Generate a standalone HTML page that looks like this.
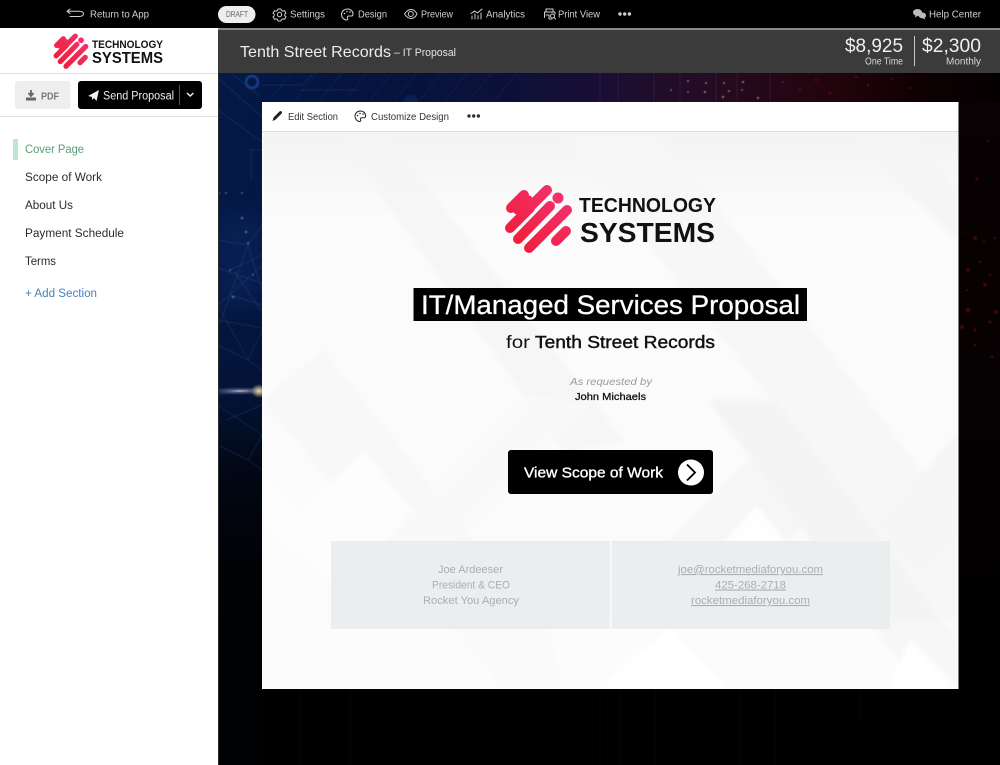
<!DOCTYPE html>
<html lang="en">
<head>
<meta charset="utf-8">
<title>Tenth Street Records – IT Proposal</title>
<style>
html,body{margin:0;padding:0;width:1000px;height:765px;overflow:hidden;background:#000}
svg{display:block}
text{font-family:"Liberation Sans","DejaVu Sans",sans-serif}
.t{fill:#cfcfcf;font-size:10.5px}
.n{fill:#2b2b2b;font-size:11.5px}
.c{fill:#a8afb1;font-size:11px}
.ic{fill:none;stroke:#cfcfcf;stroke-width:1;stroke-linecap:round;stroke-linejoin:round}
.k{fill:none;stroke:#222;stroke-width:1;stroke-linecap:round;stroke-linejoin:round}
.m{stroke-width:.3px}
</style>
</head>
<body>
<svg xmlns="http://www.w3.org/2000/svg" width="1000" height="765" viewBox="0 0 1000 765">
<defs>
<linearGradient id="bgH" x1="218" y1="0" x2="1000" y2="0" gradientUnits="userSpaceOnUse">
<stop offset="0" stop-color="#051c50"/><stop offset=".22" stop-color="#061645"/><stop offset=".38" stop-color="#0e1240"/><stop offset=".5" stop-color="#1e103a"/><stop offset=".62" stop-color="#2a0d28"/><stop offset=".78" stop-color="#28050f"/><stop offset=".9" stop-color="#100003"/><stop offset="1" stop-color="#040001"/>
</linearGradient>
<linearGradient id="bgV" x1="0" y1="73" x2="0" y2="765" gradientUnits="userSpaceOnUse">
<stop offset="0" stop-color="#000" stop-opacity=".12"/><stop offset=".22" stop-color="#000" stop-opacity=".12"/><stop offset=".46" stop-color="#000" stop-opacity=".3"/><stop offset=".58" stop-color="#000" stop-opacity=".75"/><stop offset=".72" stop-color="#000" stop-opacity=".94"/><stop offset="1" stop-color="#000" stop-opacity=".98"/>
</linearGradient>
<linearGradient id="rightTint" x1="0" y1="102" x2="0" y2="620" gradientUnits="userSpaceOnUse">
<stop offset="0" stop-color="#090103"/><stop offset=".6" stop-color="#060102"/><stop offset="1" stop-color="#000"/>
</linearGradient>
<radialGradient id="glare"><stop offset="0" stop-color="#d8cfc0" stop-opacity=".9"/><stop offset=".4" stop-color="#8d93b8" stop-opacity=".45"/><stop offset="1" stop-color="#7088c0" stop-opacity="0"/></radialGradient>
<radialGradient id="glareC"><stop offset="0" stop-color="#f2d898"/><stop offset="1" stop-color="#f2d898" stop-opacity="0"/></radialGradient>
<linearGradient id="logoU" gradientUnits="userSpaceOnUse" x1="505" y1="250" x2="568" y2="187">
<stop offset="0" stop-color="#ee1c33"/><stop offset="1" stop-color="#f23372"/>
</linearGradient>
<linearGradient id="top" x1="0" y1="132" x2="0" y2="215" gradientUnits="userSpaceOnUse">
<stop offset="0" stop-color="#f3f3f3"/><stop offset="1" stop-color="#f3f3f3" stop-opacity="0"/>
</linearGradient>
<filter id="soft"><feGaussianBlur stdDeviation=".5"/></filter>
<filter id="soft2"><feGaussianBlur stdDeviation="2"/></filter>
<filter id="soft3"><feGaussianBlur stdDeviation="14"/></filter>
</defs>

<!-- stage background -->
<rect x="218" y="73" width="782" height="692" fill="url(#bgH)"/>
<rect x="262" y="300" width="738" height="465" fill="#000" opacity=".55"/>
<rect x="218" y="73" width="782" height="692" fill="url(#bgV)"/>
<rect x="218" y="215" width="44" height="95" fill="#0c2d6c" opacity=".4" filter="url(#soft3)"/>
<rect x="958" y="102" width="42" height="663" fill="url(#rightTint)"/>

<!-- circuit and network lines -->
<g stroke="#4a6fb8" stroke-width=".7" fill="none" opacity=".32" filter="url(#soft)">
<path d="M218 78l45 40M232 74l28 22M218 110l44 32M250 150l12 0M251 150v30M262 255l-32 15M218 240l30 5 14-20M248 245l-18 50M248 245l14 45M230 295l-12 10M230 295l32 10M218 268l44 15M230 295l-10 30M230 295l32-30M218 320l44 8M235 272l27 40M218 345l30 15 14-30M248 360l14 10M218 305l30 55M218 395l44-8M218 405l44 30M226 420l36-15M218 445l30 15 14-25M248 460l14 10"/>
<path d="M270 100l22-27M295 100l22-27M320 100l22-27M345 100l22-27M370 100l22-27M395 100l22-27M420 100l22-27M445 100l22-27M470 100l22-27M495 100l22-27" opacity=".6"/>
<path d="M262 85h40l10-10M300 90h60"/>
<path d="M600 73v29M618 73v29M654 73v29M680 73v29M716 73v29M737 73v29M770 73v29" stroke="#a58ab8" opacity=".6"/>
</g>
<circle cx="252" cy="82" r="6" fill="none" stroke="#123a7c" stroke-width="3" filter="url(#soft)"/>
<circle cx="411" cy="103" r="8" fill="#123068" opacity=".45"/>
<g fill="#8fb0e6" opacity=".45" filter="url(#soft)">
<circle cx="242" cy="193" r="1"/><circle cx="219" cy="193" r="1"/><circle cx="226" cy="193" r="1"/><circle cx="242" cy="218" r="1.400"/><circle cx="246" cy="232" r="1.400"/><circle cx="248" cy="243" r="1.200"/><circle cx="233" cy="297" r="1.400"/><circle cx="253" cy="275" r="1"/><circle cx="230" cy="270" r="1"/>
</g>
<ellipse cx="240" cy="391" rx="34" ry="4" fill="url(#glare)"/>
<ellipse cx="259" cy="391" rx="8" ry="7" fill="url(#glareC)"/>
<g fill="#e7c8d8" opacity=".6" filter="url(#soft)">
<circle cx="688" cy="81" r="1"/><circle cx="706" cy="83" r="1"/><circle cx="724" cy="83" r="1"/><circle cx="743" cy="82" r="1.100"/><circle cx="729" cy="91" r="1"/><circle cx="705" cy="92" r="1.100"/><circle cx="671" cy="90" r=".9"/><circle cx="688" cy="92" r=".9"/><circle cx="758" cy="98" r="1.100"/><circle cx="723" cy="97" r="1.100"/><circle cx="742" cy="90" r=".9"/>
</g>
<g fill="#a02034" opacity=".7" filter="url(#soft)">
<circle cx="783" cy="82" r="1"/><circle cx="800" cy="90" r="1"/><circle cx="816" cy="80" r="1"/><circle cx="830" cy="93" r="1"/><circle cx="856" cy="77" r="1"/><circle cx="868" cy="85" r="1"/><circle cx="892" cy="79" r=".9"/><circle cx="910" cy="88" r=".9"/>
</g>
<g fill="#5a0d16" opacity=".65" filter="url(#soft)">
<circle cx="975" cy="238" r="2"/><circle cx="988" cy="141" r="1.200"/><circle cx="977" cy="179" r="1.600"/><circle cx="965" cy="232" r="1"/><circle cx="984" cy="242" r="1.200"/><circle cx="995" cy="238" r="1.200"/><circle cx="968" cy="270" r="2"/><circle cx="985" cy="285" r="2"/><circle cx="996" cy="312" r="2.200"/><circle cx="968" cy="310" r="2.400"/><circle cx="975" cy="330" r="1.600"/><circle cx="990" cy="322" r="1.800"/><circle cx="962" cy="327" r="2"/><circle cx="975" cy="345" r="1.400"/><circle cx="992" cy="357" r="1.400"/><circle cx="980" cy="262" r="1.400"/><circle cx="990" cy="275" r="1.200"/><circle cx="967" cy="290" r="1.200"/>
</g>
<g stroke="#140508" stroke-width="1" opacity=".6">
<path d="M620 690v75M655 690v75M740 690v75M775 690v75M600 690v75M300 690v75M350 690v75M860 690v30"/>
</g>
<rect x="218" y="73" width="1" height="692" fill="#2c2c2c"/>

<!-- top bar -->
<rect width="1000" height="28" fill="#000"/>
<rect x="218" y="28" width="782" height="45" fill="#3b3b3b"/>
<rect x="218" y="28" width="782" height="2" fill="#8a8a8a"/>
<rect x="0" y="28" width="218" height="737" fill="#fff"/>

<path class="ic" d="M70 9l-3 2.300 3 2.200M67 11.300h12c3 0 4.500 1 4.500 2.500S82 16.500 79 16.500h-9"/>
<text class="t" x="90" y="17.500" textLength="59" lengthAdjust="spacingAndGlyphs">Return to App</text>
<rect x="218" y="6" width="37.500" height="17" rx="8.500" fill="#eee"/>
<text x="226" y="17" font-size="8" fill="#666" textLength="22" lengthAdjust="spacingAndGlyphs">DRAFT</text>

<!-- settings gear -->
<circle class="ic" cx="279.500" cy="14.500" r="2.200"/>
<path class="ic" d="M278 9h3l.5 1.500 1.500.7 1.500-.6 1.500 2.500-1.200 1 0 1.800 1.200 1-1.500 2.500-1.500-.6-1.500.7-.5 1.500h-3l-.5-1.500-1.500-.7-1.500.6-1.500-2.500 1.200-1 0-1.800-1.200-1 1.500-2.500 1.500.6 1.500-.7z"/>
<text class="t" x="290" y="17.500" textLength="35" lengthAdjust="spacingAndGlyphs">Settings</text>
<!-- palette -->
<path class="ic" d="M347.500 9c-3.500 0-6 2.500-6 5.500 0 3 2.500 5.500 5 5.500 1.500 0 1.500-1 1-2-.5-1.200.2-2 1.500-2h2.500c1 0 1.500-.8 1.500-2 0-3-2.500-5-5.500-5z"/>
<g fill="#cfcfcf"><circle cx="344.500" cy="13.500" r=".8"/><circle cx="347" cy="11.500" r=".8"/><circle cx="350" cy="12" r=".8"/></g>
<text class="t" x="358" y="17.500" textLength="29" lengthAdjust="spacingAndGlyphs">Design</text>
<!-- eye -->
<path class="ic" d="M404.500 14c2-3 4-4.500 6.500-4.500s4.500 1.500 6 4.500c-1.500 3-3.500 4.500-6 4.500s-4.500-1.500-6.500-4.500z"/>
<circle class="ic" cx="410.800" cy="14" r="2.500"/>
<text class="t" x="421" y="17.500" textLength="32" lengthAdjust="spacingAndGlyphs">Preview</text>
<!-- analytics -->
<path class="ic" d="M471 13.500l3.500-2.500 3 2 4.500-4M472 19v-3M475 19v-5M478 19v-3.500M481 19v-6"/>
<text class="t" x="486" y="17.500" textLength="39" lengthAdjust="spacingAndGlyphs">Analytics</text>
<!-- print view -->
<path class="ic" d="M546 12V9h7v3M544.500 17.500V12h10.500v2M546 15h3v4h3"/>
<circle class="ic" cx="552.500" cy="16" r="2"/>
<path class="ic" d="M554 17.500l1.500 1.500"/>
<text class="t" x="558" y="17.500" textLength="42" lengthAdjust="spacingAndGlyphs">Print View</text>
<g fill="#cfcfcf"><circle cx="620" cy="14" r="1.700"/><circle cx="624.700" cy="14" r="1.700"/><circle cx="629.400" cy="14" r="1.700"/></g>
<!-- help -->
<path d="M917.500 9c2.500 0 4.500 1.500 4.500 3.500S920 16 917.500 16l-2.500 1.500.5-2c-1.500-.6-2.500-1.700-2.500-3 0-2 2-3.500 4.500-3.500z" fill="#bdbdbd"/>
<path d="M922 12.500c2.500 0 4 1.300 4 3 0 1-.5 1.800-1.300 2.300l.5 1.700-2.500-1.300c-2 0-4-1-4-2.500 1.800-.2 3.300-1.500 3.300-3.200z" fill="#bdbdbd"/>
<text class="t" x="929" y="17.500" textLength="52" lengthAdjust="spacingAndGlyphs">Help Center</text>

<!-- proposal header -->
<text x="240" y="57" font-size="16" fill="#ececec" textLength="151" lengthAdjust="spacingAndGlyphs">Tenth Street Records</text>
<text x="394" y="56" font-size="11" fill="#e4e4e4" textLength="62" lengthAdjust="spacingAndGlyphs">– IT Proposal</text>
<text x="845" y="52" font-size="19" fill="#f0f0f0" textLength="58" lengthAdjust="spacingAndGlyphs">$8,925</text>
<text x="865" y="64.500" font-size="10" fill="#d8d8d8" textLength="38" lengthAdjust="spacingAndGlyphs">One Time</text>
<rect x="914" y="36" width="1" height="30" fill="#c8c8c8"/>
<text x="922" y="52" font-size="19" fill="#f0f0f0" textLength="59" lengthAdjust="spacingAndGlyphs">$2,300</text>
<text x="946" y="64.500" font-size="10" fill="#d8d8d8" textLength="35" lengthAdjust="spacingAndGlyphs">Monthly</text>

<!-- sidebar logo -->
<g transform="translate(53 34) scale(.52) translate(-504 -186)">
<g fill="none" stroke="url(#logoU)" stroke-width="10" stroke-linecap="round">
<path d="M511 208l13-13M510 228l20-20M526 211l21-21M518 239l32-33M529 248l38-38M556 241l10-10"/>
<path d="M517 211l12-12" stroke-width="7"/>
</g>
<circle cx="558" cy="198" r="5.500" fill="#f2306a"/>
</g>
<text x="92" y="48" font-size="11" font-weight="700" fill="#111" textLength="71" lengthAdjust="spacingAndGlyphs">TECHNOLOGY</text>
<text x="92" y="63" font-size="15.500" font-weight="700" fill="#111" textLength="71" lengthAdjust="spacingAndGlyphs">SYSTEMS</text>
<rect x="0" y="73" width="218" height="1" fill="#e0e0e0"/>
<rect x="0" y="116" width="218" height="1" fill="#e0e0e0"/>

<!-- actions -->
<rect x="15" y="81" width="55.500" height="28" rx="3" fill="#eeeeee"/>
<path d="M31 90v5M28.500 93l2.500 3 2.500-3" fill="none" stroke="#666" stroke-width="1.800"/>
<path d="M26 97.500h10v3H26z" fill="#666"/>
<text x="41" y="99.500" font-size="10.500" font-weight="700" fill="#777" textLength="18" lengthAdjust="spacingAndGlyphs">PDF</text>
<rect x="78" y="81" width="124" height="28" rx="3" fill="#000"/>
<path d="M88 96l11-6-2.500 11-2.500-3-2 2v-3z" fill="#f0f0f0"/>
<text x="103" y="99.500" font-size="11.500" fill="#eee" textLength="71" lengthAdjust="spacingAndGlyphs">Send Proposal</text>
<rect x="179" y="85" width="1" height="20" fill="#555"/>
<path d="M187 93l3.200 3 3.200-3" fill="none" stroke="#eee" stroke-width="1.500"/>

<!-- navigation -->
<rect x="13" y="139" width="5" height="21" fill="#bce8d0"/>
<text x="25" y="153" font-size="11.500" fill="#5b9c7a" textLength="59" lengthAdjust="spacingAndGlyphs">Cover Page</text>
<text class="n" x="25" y="181" textLength="77" lengthAdjust="spacingAndGlyphs">Scope of Work</text>
<text class="n" x="25" y="209" textLength="48" lengthAdjust="spacingAndGlyphs">About Us</text>
<text class="n" x="25" y="237" textLength="99" lengthAdjust="spacingAndGlyphs">Payment Schedule</text>
<text class="n" x="25" y="265" textLength="31" lengthAdjust="spacingAndGlyphs">Terms</text>
<text x="25" y="297" font-size="11.500" fill="#4482bf" textLength="72" lengthAdjust="spacingAndGlyphs">+ Add Section</text>

<!-- card -->
<rect x="262" y="102" width="696.500" height="587" fill="#fff"/>
<rect x="263" y="132" width="695" height="556.500" fill="#fbfbfb"/>
<svg x="263" y="132" width="695" height="556.500" viewBox="263 132 695 556.500">
<rect x="263" y="132" width="695" height="90" fill="url(#top)"/>
<g filter="url(#soft2)">
<path d="M335 132h50l240 310-60 10z" fill="#f5f5f5" opacity=".8"/>
<path d="M560 132h100l298 385v120z" fill="#f6f6f6" opacity=".8"/>
<path d="M848 132h60l50 60v50z" fill="#f5f5f5"/>
<path d="M263 400l60-50 230 290 10 50h-60z" fill="#f8f8f8"/>
<path d="M380 545l150-150 60 10-150 150z" fill="#f9f9f9"/>
<path d="M632 580l140-145 55 65-120 125h-75z" fill="#f6f6f6"/>
<path d="M708 400h68l182 240v48h-40z" fill="#f4f4f4"/>
<path d="M880 527l78-96v104l-40 41z" fill="#f5f5f5"/>
<path d="M757 505l65 82H682z" fill="#fefefe"/>
<path d="M263 470l40 40 60-60 50 60-70 80-80-60z" fill="#fdfdfd"/>
<path d="M425 630l70 58h-125zM700 630l60 58h-140z" fill="#f9f9f9"/>
<path d="M600 688l70-60 60 60zM910 640l48 48h-70z" fill="#fff"/>
<path d="M263 620h695v68H263z" fill="#fff" opacity=".3"/>
</g>
</svg>
<rect x="262" y="131" width="696.500" height="1" fill="#dcdcdc"/>

<!-- card toolbar -->
<path d="M272.500 121l1-3.500 6-6c.6-.6 1.600-.6 2.100 0s.6 1.500 0 2.100l-6 6z" fill="#222"/>
<text x="288" y="120" font-size="10" fill="#333" textLength="50" lengthAdjust="spacingAndGlyphs">Edit Section</text>
<path class="k" d="M360.500 111c-3.200 0-5.500 2.300-5.500 5.200 0 2.900 2.300 5.300 4.500 5.300 1.500 0 1.500-1 1-1.900-.5-1.100.2-1.900 1.300-1.900h2.400c1 0 1.400-.8 1.400-1.900 0-2.800-2.200-4.800-5.100-4.800z"/>
<g fill="#222"><circle cx="357.500" cy="115.500" r=".8"/><circle cx="360" cy="113.500" r=".8"/><circle cx="363" cy="114" r=".8"/></g>
<text x="371" y="120" font-size="10" fill="#333" textLength="78" lengthAdjust="spacingAndGlyphs">Customize Design</text>
<g fill="#333"><circle cx="469" cy="116" r="1.700"/><circle cx="473.700" cy="116" r="1.700"/><circle cx="478.400" cy="116" r="1.700"/></g>

<!-- cover logo -->
<g fill="none" stroke="url(#logoU)" stroke-width="10" stroke-linecap="round">
<path d="M511 208l13-13M510 228l20-20M526 211l21-21M518 239l32-33M529 248l38-38M556 241l10-10"/>
<path d="M517 211l12-12" stroke-width="7"/>
</g>
<circle cx="558" cy="198" r="5.500" fill="#f2306a"/>
<text x="579" y="212" font-size="20" font-weight="700" fill="#111" textLength="137" lengthAdjust="spacingAndGlyphs">TECHNOLOGY</text>
<text x="580" y="242" font-size="27.500" font-weight="700" fill="#111" textLength="135" lengthAdjust="spacingAndGlyphs">SYSTEMS</text>

<!-- headline -->
<rect x="413.500" y="288" width="393.500" height="33" fill="#000"/>
<text class="m" x="421" y="314" font-size="26.500" fill="#fff" stroke="#fff" textLength="379" lengthAdjust="spacingAndGlyphs">IT/Managed Services Proposal</text>
<text x="506" y="348" font-size="17.500" fill="#111" textLength="24" lengthAdjust="spacingAndGlyphs">for</text>
<text x="535" y="348" font-size="17.500" fill="#111" stroke="#111" stroke-width=".45" textLength="180" lengthAdjust="spacingAndGlyphs">Tenth Street Records</text>
<text x="570" y="385" font-size="10.500" font-style="italic" fill="#9a9a9a" textLength="82" lengthAdjust="spacingAndGlyphs">As requested by</text>
<text x="575" y="400" font-size="10.500" fill="#111" stroke="#111" stroke-width=".3" textLength="71" lengthAdjust="spacingAndGlyphs">John Michaels</text>

<!-- call to action -->
<rect x="508" y="450" width="205" height="44" rx="3" fill="#000"/>
<text x="524" y="477.500" font-size="15" fill="#fff" stroke="#fff" stroke-width=".35" textLength="139" lengthAdjust="spacingAndGlyphs">View Scope of Work</text>
<circle cx="691" cy="472.500" r="13" fill="#fff"/>
<path d="M687 464.500l8 8-8 8" fill="none" stroke="#000" stroke-width="1.800"/>

<!-- contact -->
<rect x="331" y="541" width="279" height="88" fill="#ebeeef"/>
<rect x="611.500" y="541" width="278.500" height="88" fill="#ebeeef"/>
<text class="c" x="438" y="573" textLength="65" lengthAdjust="spacingAndGlyphs">Joe Ardeeser</text>
<text class="c" x="432" y="588.500" textLength="78" lengthAdjust="spacingAndGlyphs">President &amp; CEO</text>
<text class="c" x="423" y="604" textLength="96" lengthAdjust="spacingAndGlyphs">Rocket You Agency</text>
<text class="c" x="678" y="573" text-decoration="underline" textLength="145" lengthAdjust="spacingAndGlyphs">joe@rocketmediaforyou.com</text>
<text class="c" x="715" y="588.500" text-decoration="underline" textLength="71" lengthAdjust="spacingAndGlyphs">425-268-2718</text>
<text class="c" x="691" y="604" text-decoration="underline" textLength="119" lengthAdjust="spacingAndGlyphs">rocketmediaforyou.com</text>
</svg>
</body>
</html>
